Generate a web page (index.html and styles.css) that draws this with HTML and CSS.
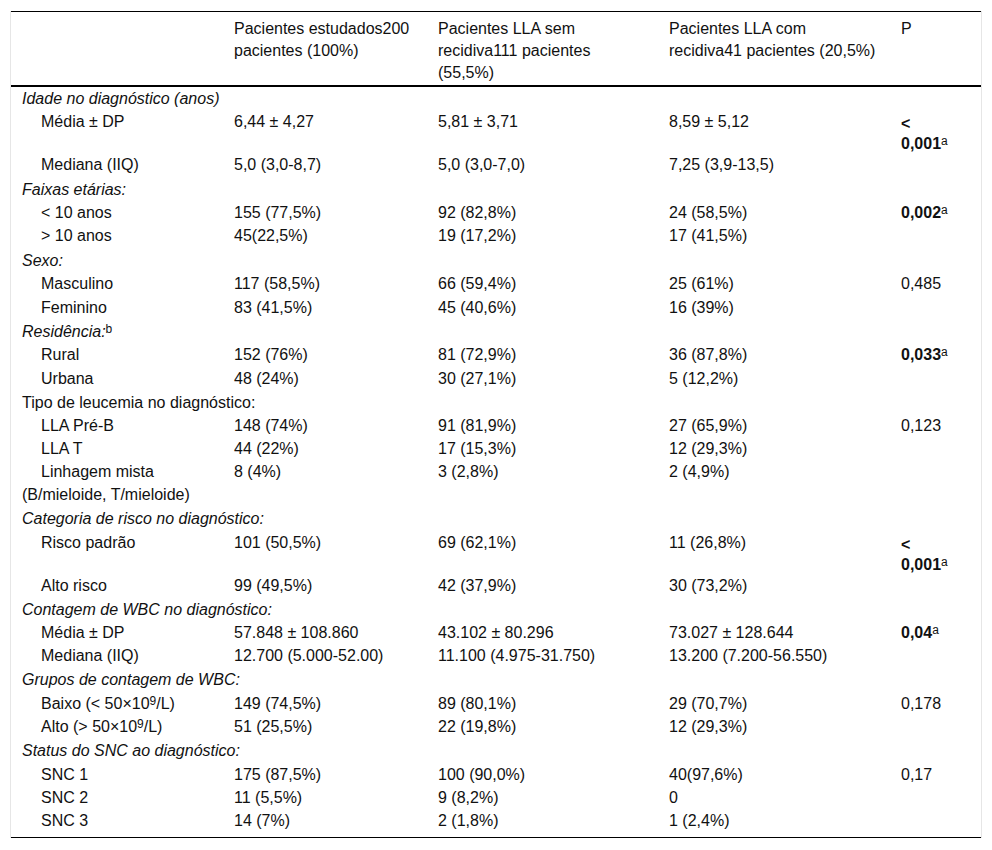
FILE: index.html
```html
<!DOCTYPE html>
<html lang="pt">
<head>
<meta charset="utf-8">
<title>Tabela</title>
<link rel="stylesheet" href="styles.css">
</head>
<body>
<div class="table-wrap">
<table class="data">
<colgroup>
<col class="c1"><col class="c2"><col class="c3"><col class="c4"><col class="c5">
</colgroup>
<thead>
<tr>
<th></th>
<th>Pacientes estudados200 pacientes (100%)</th>
<th>Pacientes LLA sem recidiva111 pacientes (55,5%)</th>
<th>Pacientes LLA com recidiva41 pacientes (20,5%)</th>
<th>P</th>
</tr>
</thead>
<tbody>
<tr class="group first"><td colspan="5"><em>Idade no diagnóstico (anos)</em></td></tr>
<tr><td class="sub">Média ± DP</td><td>6,44 ± 4,27</td><td>5,81 ± 3,71</td><td>8,59 ± 5,12</td><td class="pwrap"><b>&lt;</b><br><b>0,001</b><sup>a</sup></td></tr>
<tr><td class="sub">Mediana (IIQ)</td><td>5,0 (3,0-8,7)</td><td>5,0 (3,0-7,0)</td><td>7,25 (3,9-13,5)</td><td></td></tr>

<tr class="group"><td colspan="5"><em>Faixas etárias:</em></td></tr>
<tr><td class="sub">&lt; 10 anos</td><td>155 (77,5%)</td><td>92 (82,8%)</td><td>24 (58,5%)</td><td><b>0,002</b><sup>a</sup></td></tr>
<tr><td class="sub">&gt; 10 anos</td><td>45(22,5%)</td><td>19 (17,2%)</td><td>17 (41,5%)</td><td></td></tr>

<tr class="group"><td colspan="5"><em>Sexo:</em></td></tr>
<tr><td class="sub">Masculino</td><td>117 (58,5%)</td><td>66 (59,4%)</td><td>25 (61%)</td><td>0,485</td></tr>
<tr><td class="sub">Feminino</td><td>83 (41,5%)</td><td>45 (40,6%)</td><td>16 (39%)</td><td></td></tr>

<tr class="group"><td colspan="5"><em>Residência:</em><sup>b</sup></td></tr>
<tr><td class="sub">Rural</td><td>152 (76%)</td><td>81 (72,9%)</td><td>36 (87,8%)</td><td><b>0,033</b><sup>a</sup></td></tr>
<tr><td class="sub">Urbana</td><td>48 (24%)</td><td>30 (27,1%)</td><td>5 (12,2%)</td><td></td></tr>

<tr class="group tight"><td colspan="5">Tipo de leucemia no diagnóstico:</td></tr>
<tr><td class="sub">LLA Pré-B</td><td>148 (74%)</td><td>91 (81,9%)</td><td>27 (65,9%)</td><td>0,123</td></tr>
<tr><td class="sub">LLA T</td><td>44 (22%)</td><td>17 (15,3%)</td><td>12 (29,3%)</td><td></td></tr>
<tr><td class="sub">Linhagem mista (B/mieloide, T/mieloide)</td><td>8 (4%)</td><td>3 (2,8%)</td><td>2 (4,9%)</td><td></td></tr>

<tr class="group"><td colspan="5"><em>Categoria de risco no diagnóstico:</em></td></tr>
<tr><td class="sub">Risco padrão</td><td>101 (50,5%)</td><td>69 (62,1%)</td><td>11 (26,8%)</td><td class="pwrap"><b>&lt;</b><br><b>0,001</b><sup>a</sup></td></tr>
<tr><td class="sub">Alto risco</td><td>99 (49,5%)</td><td>42 (37,9%)</td><td>30 (73,2%)</td><td></td></tr>

<tr class="group tight"><td colspan="5"><em>Contagem de WBC no diagnóstico:</em></td></tr>
<tr><td class="sub">Média ± DP</td><td>57.848 ± 108.860</td><td>43.102 ± 80.296</td><td>73.027 ± 128.644</td><td><b>0,04</b><sup>a</sup></td></tr>
<tr><td class="sub">Mediana (IIQ)</td><td>12.700 (5.000-52.00)</td><td>11.100 (4.975-31.750)</td><td>13.200 (7.200-56.550)</td><td></td></tr>

<tr class="group tight"><td colspan="5"><em>Grupos de contagem de WBC:</em></td></tr>
<tr><td class="sub">Baixo (&lt; 50×10<sup>9</sup>/L)</td><td>149 (74,5%)</td><td>89 (80,1%)</td><td>29 (70,7%)</td><td>0,178</td></tr>
<tr><td class="sub">Alto (&gt; 50×10<sup>9</sup>/L)</td><td>51 (25,5%)</td><td>22 (19,8%)</td><td>12 (29,3%)</td><td></td></tr>

<tr class="group"><td colspan="5"><em>Status do SNC ao diagnóstico:</em></td></tr>
<tr><td class="sub">SNC 1</td><td>175 (87,5%)</td><td>100 (90,0%)</td><td>40(97,6%)</td><td>0,17</td></tr>
<tr><td class="sub">SNC 2</td><td>11 (5,5%)</td><td>9 (8,2%)</td><td>0</td><td></td></tr>
<tr class="last"><td class="sub">SNC 3</td><td>14 (7%)</td><td>2 (1,8%)</td><td>1 (2,4%)</td><td></td></tr>
</tbody>
</table>
</div>
</body>
</html>
```

FILE: styles.css
```css
html, body {
  margin: 0;
  padding: 0;
  background: #ffffff;
}

body {
  font-family: "Liberation Sans", Arial, sans-serif;
  font-size: 16px;
  color: #111111;
}

.table-wrap {
  margin: 11px 10px 0 10px;
  border-left: 1px solid #e6e6e6;
  border-right: 1px solid #e6e6e6;
}

.data {
  width: 100%;
  border-collapse: collapse;
  table-layout: fixed;
  line-height: 22.2px;
  border-top: 1px solid #000000;
  border-bottom: 1px solid #000000;
}

.c1 { width: 211px; }
.c2 { width: 204px; }
.c3 { width: 231px; }
.c4 { width: 232px; }
.c5 { width: 92px; }

.data th,
.data td {
  text-align: left;
  vertical-align: top;
  padding: 0 12px 1px 12px;
}

.data th:first-child,
.data td:first-child {
  padding-left: 11px;
}

.data th {
  font-weight: normal;
  padding-top: 6px;
  padding-bottom: 0.5px;
  border-bottom: 2px solid #000000;
}

.data tr.group td {
  padding-top: 1.5px;
}

.data tr.group.tight td {
  padding-top: 1px;
}

.data tr.group.first td {
  padding-top: 1px;
}

.data tr.last td {
  padding-bottom: 5px;
}

.data td.sub {
  text-indent: 19px;
}

.data td.pwrap {
  line-height: 20px;
  padding-top: 3px;
  padding-bottom: 0;
}

.data em {
  font-style: italic;
}

.data b {
  font-weight: bold;
}

.data sup {
  font-size: 12px;
  line-height: 0;
  vertical-align: 4px;
  font-weight: normal;
}
```
